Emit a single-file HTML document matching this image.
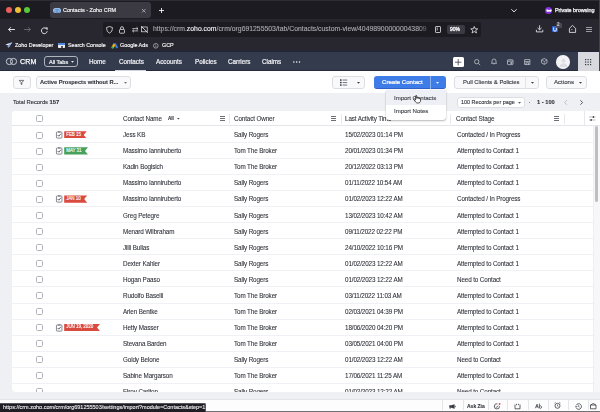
<!DOCTYPE html>
<html><head><meta charset="utf-8">
<style>
*{margin:0;padding:0;box-sizing:border-box}
html,body{width:600px;height:412px;overflow:hidden;background:#fff;font-family:"Liberation Sans",sans-serif;position:relative}
.t,.nv,.row span,.hd{will-change:transform;-webkit-text-stroke-width:0.12px}
.a{position:absolute}
.t{position:absolute;white-space:nowrap;line-height:1}
svg{position:absolute;overflow:visible}
#tabstrip{left:0;top:0;width:600px;height:19px;background:#1c1b22}
#tab{left:49.5px;top:2px;width:101.5px;height:16px;background:#3b3a43;border-radius:3px}
.tl{position:absolute;top:7.1px;width:6.3px;height:6.3px;border-radius:50%}
#nav{left:0;top:19px;width:600px;height:31.5px;background:#28272f}
#url{left:103px;top:22px;width:377.5px;height:14.5px;background:#1c1b22;border-radius:2px}
.wt{color:#f8f8fa;-webkit-text-stroke:0.15px #f8f8fa}
#crm{left:0;top:50.5px;width:600px;height:20.8px;background:#343b4d;border-top:1.5px solid #20263a;border-bottom:1.3px solid #252b3b}
.nv{position:absolute;top:59.2px;font-size:6.3px;color:#f2f3f6;-webkit-text-stroke:0.2px #f2f3f6;white-space:nowrap;line-height:1}
.btn{position:absolute;top:75.8px;height:13.6px;border:1px solid #dcdee3;border-radius:3px;background:#f9f9fb}
#gray{left:0;top:93px;width:600px;height:307px;background:#eff0f4}
#card{left:12px;top:110.7px;width:588px;height:281px;background:#fff;border-radius:4px 0 0 4px;overflow:hidden}
#thead{left:0;top:0;width:588px;height:15.5px;background:#fff;border-bottom:1px solid #e3e5e9}
.row{position:absolute;left:12px;width:581px;height:16.05px;border-bottom:1px solid #f0f1f4}
.row span{position:absolute;top:5.3px;font-size:6.3px;letter-spacing:-0.12px;color:#2e3139;-webkit-text-stroke-width:0.08px;white-space:nowrap;line-height:1}
.cb{position:absolute;left:23.8px;top:4.5px;width:7.2px;height:7.2px;border:1px solid #b0b3b9;border-radius:1.6px}
.row span.rib{left:52.2px;top:4.3px;height:7.2px;color:#fff;font-size:4.5px;letter-spacing:-0.05px;padding:1.6px 0 0 2px;line-height:1;will-change:auto;-webkit-text-stroke:0.12px #fff;clip-path:polygon(0 0,100% 0,calc(100% - 3px) 50%,100% 100%,0 100%)}
.c1{left:110.6px}.c2{left:221.8px}.c3{left:333px}.c4{left:444.5px}
.hd{position:absolute;top:5.4px;font-size:6.3px;letter-spacing:-0.12px;color:#2e3139;-webkit-text-stroke-width:0.08px;white-space:nowrap;line-height:1}
.vd{position:absolute;top:3px;width:1px;height:10px;background:#e6e8ec}
.ic{stroke:#c4c8d0;fill:none;stroke-width:0.75}
.bd{position:absolute;top:400px;width:1px;height:10px;background:#e3e5e9}
</style></head><body>
<!-- ===== browser tab strip ===== -->
<div id="tabstrip" class="a"></div>
<div class="a" style="left:0;top:0;width:600px;height:1px;background:#2e2d35"></div>
<div class="tl" style="left:5.5px;background:#ec5e57"></div>
<div class="tl" style="left:14.65px;background:#f0bf33"></div>
<div class="tl" style="left:23.8px;background:#56c93d"></div>
<div id="tab" class="a"></div>
<div class="a" style="left:53px;top:7.5px;width:8px;height:5.8px;border-radius:3px;background:#9ec4ee"></div>
<svg style="left:53px;top:7.5px" width="8" height="6" viewBox="0 0 8 6"><circle cx="3.2" cy="2.9" r="1.6" fill="none" stroke="#4a78c0" stroke-width="0.6"/><circle cx="4.8" cy="2.9" r="1.6" fill="none" stroke="#4a78c0" stroke-width="0.6"/></svg>
<div class="t wt" style="left:63px;top:8px;font-size:5.5px">Contacts - Zoho CRM</div>
<svg style="left:142px;top:8.5px" width="3.5" height="3.5" viewBox="0 0 4 4"><path d="M0 0L4 4M4 0L0 4" stroke="#c9c8ce" stroke-width="0.8"/></svg>
<svg style="left:158.5px;top:7.5px" width="5" height="5" viewBox="0 0 5 5"><path d="M2.5 0V5M0 2.5H5" stroke="#f4f4f6" stroke-width="0.9"/></svg>
<svg style="left:510.8px;top:9px" width="6" height="3.2" viewBox="0 0 6 3.2"><path d="M0.3 0.3L3 2.9L5.7 0.3" stroke="#f4f4f6" stroke-width="0.9" fill="none"/></svg>
<div class="a" style="left:544.7px;top:6.8px;width:7.3px;height:7.3px;border-radius:50%;background:#8430d9"></div>
<svg style="left:545.5px;top:8.7px" width="6" height="3.5" viewBox="0 0 6 3.5"><path d="M0.3 0.8C1.5 0 2.5 0.6 3 1.2C3.5 0.6 4.5 0 5.7 0.8C5.9 2.6 4.5 3.4 3 2.4C1.5 3.4 0.1 2.6 0.3 0.8Z" fill="#fff"/></svg>
<div class="t wt" style="left:555px;top:8.1px;font-size:5.45px;letter-spacing:-0.05px;-webkit-text-stroke-width:0.25px">Private browsing</div>

<!-- ===== nav bar ===== -->
<div id="nav" class="a"></div>
<div id="url" class="a"></div>
<svg style="left:7.5px;top:27.3px" width="7" height="5" viewBox="0 0 7 5"><path d="M6.9 2.5H0.6M2.9 0.2L0.6 2.5L2.9 4.8" stroke="#f4f4f6" stroke-width="0.9" fill="none"/></svg>
<svg style="left:24px;top:27.3px" width="7" height="5" viewBox="0 0 7 5"><path d="M0.1 2.5H6.4M4.1 0.2L6.4 2.5L4.1 4.8" stroke="#6e6d74" stroke-width="0.9" fill="none"/></svg>
<svg style="left:40.6px;top:26.5px" width="7" height="7" viewBox="0 0 7 7"><path d="M6 2.6A2.9 2.9 0 1 0 6.2 4.2" stroke="#f4f4f6" stroke-width="0.9" fill="none"/><path d="M4.4 0.6L6.6 0.6L6.6 2.8Z" fill="#f4f4f6"/></svg>
<svg style="left:106px;top:26px" width="7" height="7.6" viewBox="0 0 7 7.6"><path d="M3.5 0.5L6.4 1.5C6.4 4.5 5.5 6.2 3.5 7.1C1.5 6.2 0.6 4.5 0.6 1.5Z" stroke="#e8e8ea" stroke-width="0.8" fill="none"/></svg>
<svg style="left:119.4px;top:26px" width="6" height="7.6" viewBox="0 0 6 7.6"><path d="M1.5 3.4V2.2A1.5 1.5 0 0 1 4.5 2.2V3.4" stroke="#e8e8ea" stroke-width="0.8" fill="none"/><rect x="0.5" y="3.4" width="5" height="3.8" rx="0.8" stroke="#e8e8ea" stroke-width="0.8" fill="none"/></svg>
<svg style="left:132px;top:27px" width="6.5" height="5.5" viewBox="0 0 6.5 5.5"><path d="M0.3 1.6H6M4.5 0.2L6 1.6L4.5 3M6.2 3.9H0.5M2 2.5L0.5 3.9L2 5.3" stroke="#e8e8ea" stroke-width="0.7" fill="none"/></svg>
<svg style="left:141px;top:26px" width="7" height="7" viewBox="0 0 7 7"><rect x="0.6" y="1" width="5.6" height="4.8" stroke="#e8e8ea" stroke-width="0.7" fill="none"/><path d="M0.2 0.2L6.8 6.8" stroke="#e8e8ea" stroke-width="0.8"/></svg>
<div class="t" style="left:153px;top:26.3px;font-size:6.85px;color:#a9a8ae">https://crm.<span style="color:#f4f4f6">zoho.com</span>/crm/org691255503/tab/Contacts/custom-view/404989000000043809</div>
<div class="a" style="left:418px;top:22px;width:16px;height:14.5px;background:linear-gradient(to right,rgba(28,27,34,0),#1c1b22 85%)"></div>
<svg style="left:435px;top:26px" width="6" height="7" viewBox="0 0 6 7"><rect x="0.5" y="0.5" width="5" height="6" rx="0.6" stroke="#e8e8ea" stroke-width="0.8" fill="none"/><path d="M2.2 1.5V4.5" stroke="#e8e8ea" stroke-width="0.7"/></svg>
<div class="a" style="left:447px;top:25px;width:17.5px;height:9px;background:#3b3a43;border-radius:2px"></div>
<div class="t wt" style="left:450px;top:27.4px;font-size:5px;-webkit-text-stroke-width:0.3px">90%</div>
<svg style="left:469.5px;top:25.5px" width="8.5" height="7.6" viewBox="0 0 8.5 8"><path d="M4.25 0.5L5.3 3H7.9L5.8 4.7L6.6 7.4L4.25 5.8L1.9 7.4L2.7 4.7L0.6 3H3.2Z" stroke="#f4f4f6" stroke-width="0.8" fill="none" stroke-linejoin="round"/></svg>
<svg style="left:535.8px;top:25px" width="7.2" height="7.5" viewBox="0 0 7.2 7.5"><path d="M3.6 0.3V4.8M1.6 2.9L3.6 4.8L5.6 2.9M0.4 4.8V6.9H6.8V4.8" stroke="#f4f4f6" stroke-width="0.8" fill="none"/></svg>
<div class="a" style="left:552px;top:25.8px;width:5.5px;height:6.7px;background:#2f62d6;border-radius:1px"></div>
<svg style="left:552.8px;top:26.8px" width="4" height="5" viewBox="0 0 4 5"><path d="M0.6 0.5V2.8A1.4 1.4 0 0 0 3.4 2.8V0.5" stroke="#fff" stroke-width="0.9" fill="none"/></svg>
<div class="a" style="left:555.5px;top:22.8px;width:6px;height:5.5px;background:#4a4952;border-radius:1px"></div>
<div class="t" style="left:557.3px;top:23.3px;font-size:4.5px;color:#ddd">2</div>
<svg style="left:569px;top:25px" width="7" height="7.8" viewBox="0 0 7 7.8"><path d="M3.5 0.4L6.6 3.4V7.4H0.4V3.4Z" stroke="#f4f4f6" stroke-width="0.8" fill="none" stroke-linejoin="round"/><path d="M2.2 5.2L3.4 4" stroke="#f4f4f6" stroke-width="0.7"/></svg>
<svg style="left:585.8px;top:26.7px" width="6" height="5" viewBox="0 0 6 5"><path d="M0 0.5H6M0 2.5H6M0 4.5H6" stroke="#b9b8be" stroke-width="0.8"/></svg>
<!-- ===== bookmarks ===== -->
<svg style="left:5.2px;top:42.2px" width="7.5" height="6" viewBox="0 0 7.5 6"><path d="M7.3 0.2L0.3 2.6L2.8 3.2L3.6 5.8Z" fill="#e8eef8"/><path d="M7.3 0.2L2.8 3.2L3.6 5.8Z" fill="#6fa1e8"/><path d="M3.1 3.6L1.6 5.5L3.4 4.6Z" fill="#e25544"/></svg>
<div class="t wt" style="left:14.5px;top:42.6px;font-size:5.4px">Zoho Developer</div>
<div class="a" style="left:58.3px;top:42.8px;width:7px;height:5.4px;background:#e8ecf2;border-radius:0.8px"></div>
<div class="a" style="left:58.3px;top:42.8px;width:7px;height:2px;background:#4f86e6;border-radius:0.8px 0.8px 0 0"></div>
<div class="a" style="left:60.8px;top:45.6px;width:2px;height:2.6px;background:#555"></div>
<div class="t wt" style="left:67.5px;top:42.6px;font-size:5.3px">Search Console</div>
<svg style="left:110.7px;top:42.5px" width="7.5" height="5.8" viewBox="0 0 7.5 5.8"><path d="M2.6 0.3L4.9 0.3L7.2 4.6L5.2 5.6Z" fill="#3c7bea"/><path d="M2.6 0.3L0.3 4.6L2.3 5.6L4.3 2.2Z" fill="#f5b400"/><circle cx="1.4" cy="4.6" r="1.1" fill="#34a853"/></svg>
<div class="t wt" style="left:119.7px;top:42.6px;font-size:5.4px">Google Ads</div>
<svg style="left:153.4px;top:42.6px" width="5.6" height="5.6" viewBox="0 0 6 6"><circle cx="3" cy="3" r="2.5" stroke="#c8c8cc" stroke-width="0.7" fill="none"/><path d="M3 2.6V4.4" stroke="#c8c8cc" stroke-width="0.7"/><circle cx="3" cy="1.7" r="0.35" fill="#c8c8cc"/></svg>
<div class="t wt" style="left:161.7px;top:42.6px;font-size:5.4px">GCP</div>
<!-- ===== crm header ===== -->
<div id="crm" class="a"></div>
<svg style="left:5px;top:57px" width="13" height="9" viewBox="0 0 13 9"><circle cx="4.4" cy="4.5" r="3.1" stroke="#cdd1d8" stroke-width="0.95" fill="none"/><circle cx="8.5" cy="4.5" r="3.1" stroke="#cdd1d8" stroke-width="0.95" fill="none"/></svg>
<div class="t" style="left:19.7px;top:58.9px;font-size:7.1px;color:#fff;letter-spacing:0.1px;-webkit-text-stroke:0.25px #fff">CRM</div>
<div class="a" style="left:44px;top:56px;width:34px;height:11px;border:1px solid #aeb3bd;border-radius:3px"></div>
<div class="nv" style="left:49px;top:59.9px;font-size:5.5px">All Tabs</div>
<svg style="left:71.2px;top:61.3px" width="3" height="2" viewBox="0 0 3 2"><path d="M0 0H3L1.5 1.8Z" fill="#eceef2"/></svg>
<div class="nv" style="left:89px">Home</div>
<div class="nv" style="left:118.6px">Contacts</div>
<div class="a" style="left:115px;top:69.6px;width:31px;height:1.4px;background:#cfd3da"></div>
<div class="nv" style="left:156px">Accounts</div>
<div class="nv" style="left:195px">Policies</div>
<div class="nv" style="left:228px">Carriers</div>
<div class="nv" style="left:262px">Claims</div>
<svg style="left:292.5px;top:61px" width="8" height="2" viewBox="0 0 8 2"><circle cx="0.9" cy="1" r="0.75" fill="#fff"/><circle cx="3.7" cy="1" r="0.75" fill="#fff"/><circle cx="6.5" cy="1" r="0.75" fill="#fff"/></svg>
<div class="a" style="left:453.3px;top:57.3px;width:10.4px;height:9.4px;background:#fff;border-radius:1.5px"></div>
<svg style="left:455.3px;top:58.8px" width="6.4" height="6.4" viewBox="0 0 6.4 6.4"><path d="M3.2 0V6.4M0 3.2H6.4" stroke="#2d3345" stroke-width="0.75"/></svg>
<svg style="left:473.5px;top:58.5px" width="6.5" height="6.5" viewBox="0 0 6.5 6.5"><circle cx="2.7" cy="2.7" r="2.2" class="ic"/><path d="M4.3 4.3L6.2 6.2" class="ic"/></svg>
<svg style="left:490.5px;top:58.3px" width="6" height="6.5" viewBox="0 0 6 6.5"><path d="M1 4.8V3A2 2 0 0 1 5 3V4.8L5.6 5.3H0.4Z" class="ic"/><path d="M2.3 5.9H3.7" class="ic"/></svg>
<svg style="left:507px;top:58.5px" width="6.5" height="6" viewBox="0 0 6.5 6"><rect x="0.5" y="0.8" width="5.5" height="4.8" rx="0.6" class="ic"/><path d="M0.5 2.2H6" class="ic"/><rect x="3.4" y="3.2" width="1.8" height="1.6" fill="#bcc1cb"/></svg>
<svg style="left:523.5px;top:58.5px" width="6.5" height="6" viewBox="0 0 6.5 6"><path d="M0.6 0.6H5.9L5.9 5.5H0.6Z M0.6 2.6H5.9 M2 5.5V3.8H4.5V5.5" class="ic"/></svg>
<svg style="left:540.5px;top:58.2px" width="6.5" height="6.8" viewBox="0 0 6.5 6.8"><path d="M3.25 0.4L6 1.9V4.9L3.25 6.4L0.5 4.9V1.9Z" class="ic"/><path d="M0.5 1.9L3.25 3.4L6 1.9M3.25 3.4V6.4" class="ic" style="stroke-width:0.6"/></svg>
<div class="a" style="left:556.3px;top:55.3px;width:13.6px;height:13.4px;border-radius:50%;background:#f3f3f5"></div>
<svg style="left:558.5px;top:57px" width="9" height="11" viewBox="0 0 9 11"><circle cx="4.5" cy="3.8" r="2" fill="#dcdde2"/><path d="M0.5 10C1 7.5 2.5 6.3 4.5 6.3C6.5 6.3 8 7.5 8.5 10Z" fill="#dcdde2"/></svg>
<div class="a" style="left:578px;top:52px;width:20.5px;height:19px;background:#d8d9de"></div>
<svg style="left:585.2px;top:58.6px" width="6.2" height="6.2" viewBox="0 0 6.2 6.2"><g fill="#34373f"><rect x="0.0" y="0.0" width="1.2" height="1.2"/><rect x="2.5" y="0.0" width="1.2" height="1.2"/><rect x="5.0" y="0.0" width="1.2" height="1.2"/><rect x="0.0" y="2.5" width="1.2" height="1.2"/><rect x="2.5" y="2.5" width="1.2" height="1.2"/><rect x="5.0" y="2.5" width="1.2" height="1.2"/><rect x="0.0" y="5.0" width="1.2" height="1.2"/><rect x="2.5" y="5.0" width="1.2" height="1.2"/><rect x="5.0" y="5.0" width="1.2" height="1.2"/></g></svg>
<div class="a" style="left:599px;top:0;width:1px;height:71px;background:#44434a"></div>
<!-- ===== toolbar ===== -->
<div class="btn" style="left:12.6px;width:18.4px"></div>
<svg style="left:19.3px;top:80.2px" width="5" height="5" viewBox="0 0 5 5"><path d="M0.3 0.4H4.7L2.9 2.6V4.6L2.1 4.1V2.6Z" stroke="#3a3d45" stroke-width="0.7" fill="none" stroke-linejoin="round"/></svg>
<div class="btn" style="left:35.5px;width:95.5px"></div>
<div class="t" style="left:40px;top:80.1px;font-size:5.7px;font-weight:bold;color:#33363e">Active Prospects without R...</div>
<svg style="left:123.8px;top:82px" width="3" height="1.8" viewBox="0 0 3 1.8"><path d="M0 0H3L1.5 1.8Z" fill="#6b6f77"/></svg>
<div class="btn" style="left:332.2px;width:32.5px"></div>
<svg style="left:340px;top:79px" width="7.5" height="7" viewBox="0 0 7.5 7"><g fill="#3a3d45"><rect x="0" y="0.3" width="1.6" height="1.5"/><rect x="0" y="2.8" width="1.6" height="1.5"/><rect x="0" y="5.3" width="1.6" height="1.5"/></g><g fill="#7d8189"><rect x="2.6" y="0.5" width="4.6" height="1.1"/><rect x="2.6" y="3" width="4.6" height="1.1"/><rect x="2.6" y="5.5" width="4.6" height="1.1"/></g></svg>
<svg style="left:357.3px;top:81.8px" width="3" height="1.8" viewBox="0 0 3 1.8"><path d="M0 0H3L1.5 1.8Z" fill="#3a3d45"/></svg>
<div class="a" style="left:374.4px;top:75.7px;width:71.3px;height:13.6px;background:#3e7ce8;border-radius:3px;border-bottom:1px solid #2f62c4"></div>
<div class="a" style="left:429.6px;top:76px;width:0.8px;height:13px;background:#8db3f3"></div>
<div class="t" style="left:382.3px;top:79.4px;font-size:6.1px;color:#fff;letter-spacing:-0.02px;-webkit-text-stroke:0.22px #fff">Create Contact</div>
<svg style="left:436px;top:82px" width="3" height="1.8" viewBox="0 0 3 1.8"><path d="M0 0H3L1.5 1.8Z" fill="#fff"/></svg>
<div class="btn" style="left:453.5px;width:85.75px"></div>
<div class="a" style="left:524.5px;top:76px;width:1px;height:13px;background:#e1e3e7"></div>
<div class="t" style="left:462.5px;top:79.5px;font-size:5.85px;color:#33363e">Pull Clients &amp; Policies</div>
<svg style="left:530.5px;top:82px" width="3" height="1.8" viewBox="0 0 3 1.8"><path d="M0 0H3L1.5 1.8Z" fill="#3a3d45"/></svg>
<div class="btn" style="left:545.5px;width:41.25px"></div>
<div class="t" style="left:553.7px;top:79.4px;font-size:6.1px;color:#33363e">Actions</div>
<svg style="left:579px;top:82px" width="3" height="1.8" viewBox="0 0 3 1.8"><path d="M0 0H3L1.5 1.8Z" fill="#3a3d45"/></svg>
<!-- ===== gray area ===== -->
<div id="gray" class="a"></div>
<div class="t" style="left:12.7px;top:99.6px;font-size:5.9px;letter-spacing:-0.08px;color:#33363e">Total Records <b>157</b></div>
<div class="a" style="left:456.75px;top:96.5px;width:68px;height:11px;background:#fff;border:1px solid #dcdee3;border-radius:3px"></div>
<div class="t" style="left:461px;top:99.6px;font-size:5.45px;color:#33363e">100 Records per page</div>
<svg style="left:518.3px;top:101.6px" width="3" height="1.8" viewBox="0 0 3 1.8"><path d="M0 0H3L1.5 1.8Z" fill="#55585f"/></svg>
<div class="a" style="left:529px;top:101.8px;width:1.3px;height:1.2px;background:#8a8d93"></div>
<div class="t" style="left:537.3px;top:99.5px;font-size:5.7px;font-weight:bold;color:#33363e">1 - 100</div>
<svg style="left:563.5px;top:100px" width="3.2" height="5" viewBox="0 0 3.2 5"><path d="M2.8 0.3L0.6 2.5L2.8 4.7" stroke="#b0b3b9" stroke-width="0.85" fill="none"/></svg>
<svg style="left:579.7px;top:100px" width="3.2" height="5" viewBox="0 0 3.2 5"><path d="M0.4 0.3L2.6 2.5L0.4 4.7" stroke="#3a3d45" stroke-width="0.85" fill="none"/></svg>
<!-- ===== card ===== -->
<div id="card" class="a">
<div id="thead" class="a"></div>
<i class="cb" style="top:4.4px"></i>
<div class="hd" style="left:110.6px">Contact Name</div>
<div class="t" style="left:156.2px;top:6.3px;font-size:4.6px;font-weight:bold;color:#33363e">All</div>
<svg style="left:165px;top:7.1px" width="2.6" height="1.5" viewBox="0 0 3 1.8"><path d="M0 0H3L1.5 1.8Z" fill="#33363e"/></svg>

<i class="vd" style="left:217.3px"></i>
<div class="hd" style="left:221.6px">Contact Owner</div>

<i class="vd" style="left:329.2px"></i>
<div class="hd" style="left:333px">Last Activity Time</div>
<i class="vd" style="left:438px"></i>
<div class="hd" style="left:444px">Contact Stage</div>

<i class="vd" style="left:551.5px"></i>
<i class="vd" style="left:571.8px;top:0;height:15.5px"></i>
<svg style="left:577px;top:5.4px" width="6.5" height="5" viewBox="0 0 6.5 5"><path d="M0 1H3.4M5.4 1H6.5M0 4H1.1M3.1 4H6.5" stroke="#9a9ea6" stroke-width="0.7"/><circle cx="4.4" cy="1" r="0.9" fill="#3a3d45"/><circle cx="2.1" cy="4" r="0.9" fill="#3a3d45"/></svg>
</div>
<div class="a" style="left:0;top:0;width:600px;height:391.7px;overflow:hidden">
<div class="row" style="top:127.00px">
<i class="cb"></i>
<svg style="left:43.7px;top:4.3px" width="6.4" height="7.5" viewBox="0 0 6.4 7.5"><rect x="0.45" y="0.9" width="5.5" height="6.2" rx="0.6" stroke="#6a6d74" stroke-width="0.8" fill="none"/><path d="M2 0.5H4.4V1.5H2Z" fill="#6a6d74"/><path d="M1.6 4L2.8 5.2L4.8 2.8" stroke="#33363e" stroke-width="0.8" fill="none"/></svg><span class="rib" style="width:22.5px;background:#d94a3f">FEB 15</span>
<span class="c1">Jess KB</span><span class="c2">Sally Rogers</span><span class="c3">15/02/2023 01:14 PM</span><span class="c4">Contacted / In Progress</span>
</div>
<div class="row" style="top:143.05px">
<i class="cb"></i>
<svg style="left:43.7px;top:4.3px" width="6.4" height="7.5" viewBox="0 0 6.4 7.5"><rect x="0.45" y="0.9" width="5.5" height="6.2" rx="0.6" stroke="#6a6d74" stroke-width="0.8" fill="none"/><path d="M2 0.5H4.4V1.5H2Z" fill="#6a6d74"/><path d="M1.6 4L2.8 5.2L4.8 2.8" stroke="#33363e" stroke-width="0.8" fill="none"/></svg><span class="rib" style="width:23.8px;background:#47a05b">MAY 31</span>
<span class="c1">Massimo Ianniruberto</span><span class="c2">Tom The Broker</span><span class="c3">20/01/2023 01:34 PM</span><span class="c4">Attempted to Contact 1</span>
</div>
<div class="row" style="top:159.10px">
<i class="cb"></i>
<span class="c1">Kadin Bogisich</span><span class="c2">Tom The Broker</span><span class="c3">20/12/2022 03:13 PM</span><span class="c4">Attempted to Contact 1</span>
</div>
<div class="row" style="top:175.15px">
<i class="cb"></i>
<span class="c1">Massimo Ianniruberto</span><span class="c2">Sally Rogers</span><span class="c3">01/11/2022 10:54 AM</span><span class="c4">Attempted to Contact 1</span>
</div>
<div class="row" style="top:191.20px">
<i class="cb"></i>
<svg style="left:43.7px;top:4.3px" width="6.4" height="7.5" viewBox="0 0 6.4 7.5"><rect x="0.45" y="0.9" width="5.5" height="6.2" rx="0.6" stroke="#6a6d74" stroke-width="0.8" fill="none"/><path d="M2 0.5H4.4V1.5H2Z" fill="#6a6d74"/><path d="M1.6 4L2.8 5.2L4.8 2.8" stroke="#33363e" stroke-width="0.8" fill="none"/></svg><span class="rib" style="width:23px;background:#d94a3f">JAN 10</span>
<span class="c1">Massimo Ianniruberto</span><span class="c2">Sally Rogers</span><span class="c3">01/02/2023 12:22 AM</span><span class="c4">Contacted / In Progress</span>
</div>
<div class="row" style="top:207.25px">
<i class="cb"></i>
<span class="c1">Greg Petegre</span><span class="c2">Sally Rogers</span><span class="c3">13/02/2023 10:42 AM</span><span class="c4">Attempted to Contact 1</span>
</div>
<div class="row" style="top:223.30px">
<i class="cb"></i>
<span class="c1">Menard Wilbraham</span><span class="c2">Sally Rogers</span><span class="c3">09/11/2022 02:22 PM</span><span class="c4">Attempted to Contact 1</span>
</div>
<div class="row" style="top:239.35px">
<i class="cb"></i>
<span class="c1">Jilli Bullas</span><span class="c2">Sally Rogers</span><span class="c3">24/10/2022 10:16 PM</span><span class="c4">Attempted to Contact 1</span>
</div>
<div class="row" style="top:255.40px">
<i class="cb"></i>
<span class="c1">Dexter Kahler</span><span class="c2">Sally Rogers</span><span class="c3">01/02/2023 12:22 AM</span><span class="c4">Attempted to Contact 1</span>
</div>
<div class="row" style="top:271.45px">
<i class="cb"></i>
<span class="c1">Hogan Paaso</span><span class="c2">Sally Rogers</span><span class="c3">01/02/2023 12:22 AM</span><span class="c4">Need to Contact</span>
</div>
<div class="row" style="top:287.50px">
<i class="cb"></i>
<span class="c1">Rudolfo Baselli</span><span class="c2">Tom The Broker</span><span class="c3">03/11/2022 11:03 AM</span><span class="c4">Attempted to Contact 1</span>
</div>
<div class="row" style="top:303.55px">
<i class="cb"></i>
<span class="c1">Arlen Bentke</span><span class="c2">Tom The Broker</span><span class="c3">02/03/2021 04:39 PM</span><span class="c4">Attempted to Contact 1</span>
</div>
<div class="row" style="top:319.60px">
<i class="cb"></i>
<svg style="left:43.7px;top:4.3px" width="6.4" height="7.5" viewBox="0 0 6.4 7.5"><rect x="0.45" y="0.9" width="5.5" height="6.2" rx="0.6" stroke="#6a6d74" stroke-width="0.8" fill="none"/><path d="M2 0.5H4.4V1.5H2Z" fill="#6a6d74"/><path d="M1.6 4L2.8 5.2L4.8 2.8" stroke="#33363e" stroke-width="0.8" fill="none"/></svg><span class="rib" style="width:35.8px;background:#d94a3f">JUN 19, 2020</span>
<span class="c1">Hetty Masser</span><span class="c2">Tom The Broker</span><span class="c3">18/06/2020 04:20 PM</span><span class="c4">Attempted to Contact 1</span>
</div>
<div class="row" style="top:335.65px">
<i class="cb"></i>
<span class="c1">Stevana Barden</span><span class="c2">Tom The Broker</span><span class="c3">03/05/2021 04:00 PM</span><span class="c4">Attempted to Contact 1</span>
</div>
<div class="row" style="top:351.70px">
<i class="cb"></i>
<span class="c1">Goldy Belone</span><span class="c2">Sally Rogers</span><span class="c3">01/02/2023 12:22 AM</span><span class="c4">Need to Contact</span>
</div>
<div class="row" style="top:367.75px">
<i class="cb"></i>
<span class="c1">Sabine Margarson</span><span class="c2">Tom The Broker</span><span class="c3">17/06/2021 11:25 AM</span><span class="c4">Attempted to Contact 1</span>
</div>
<div class="row" style="top:383.80px">
<i class="cb"></i>
<span class="c1">Elroy Carlton</span><span class="c2">Sally Rogers</span><span class="c3">01/02/2023 12:22 AM</span><span class="c4">Need to Contact</span>
</div>
</div>
<svg style="left:219.5px;top:116px" width="5" height="5" viewBox="0 0 5 5"><rect x="0" y="0" width="5" height="1" fill="#6c7078"/><rect x="0" y="2" width="5" height="1" fill="#6c7078"/><rect x="0" y="4" width="5" height="1" fill="#6c7078"/></svg><svg style="left:331.0px;top:116px" width="5" height="5" viewBox="0 0 5 5"><rect x="0" y="0" width="5" height="1" fill="#6c7078"/><rect x="0" y="2" width="5" height="1" fill="#6c7078"/><rect x="0" y="4" width="5" height="1" fill="#6c7078"/></svg><svg style="left:553.5px;top:116px" width="5" height="5" viewBox="0 0 5 5"><rect x="0" y="0" width="5" height="1" fill="#6c7078"/><rect x="0" y="2" width="5" height="1" fill="#6c7078"/><rect x="0" y="4" width="5" height="1" fill="#6c7078"/></svg>
<!-- scrollbar -->
<div class="a" style="left:593px;top:126.2px;width:7px;height:265.5px;background:#f7f7f9;border-left:1px solid #eceef1"></div>
<div class="a" style="left:594.7px;top:126.3px;width:3.7px;height:76px;background:#bdbec2;border-radius:1.5px"></div>
<!-- ===== dropdown menu ===== -->
<div class="a" style="left:385.6px;top:89.5px;width:60.9px;height:30.3px;background:#fff;border-radius:0 0 3px 3px;box-shadow:0 1px 2px rgba(0,0,0,0.28),0 0 1px rgba(0,0,0,0.2)"></div>
<div class="a" style="left:385.6px;top:89.5px;width:60.9px;height:15.2px;background:#eef0f5"></div>
<div class="t" style="left:394px;top:95.3px;font-size:6.1px;letter-spacing:-0.05px;color:#3e424a;-webkit-text-stroke:0.12px #3e424a">Import Contacts</div>
<div class="t" style="left:394px;top:108.2px;font-size:6.1px;letter-spacing:-0.05px;color:#3e424a;-webkit-text-stroke:0.12px #3e424a">Import Notes</div>
<svg style="left:412.6px;top:94.8px" width="9.5" height="8.5" viewBox="0 0 11 10"><path d="M3 1.2C3 0.4 4.4 0.4 4.4 1.2L4.4 4L4.6 3C4.8 2.4 6 2.5 6 3.2L6 4C6.2 3.3 7.4 3.4 7.4 4.1L7.4 4.6C7.6 4 8.8 4.1 8.8 4.8L8.8 6.6C8.8 8.2 7.8 9.4 6.2 9.4L5.2 9.4C4.2 9.4 3.6 8.9 3 8.2L1 5.6C0.6 5 1.4 4.2 2 4.8L3 5.8Z" fill="#fff" stroke="#111" stroke-width="0.9"/></svg>
<!-- ===== bottom bar ===== -->
<div class="a" style="left:0;top:399.3px;width:600px;height:12.7px;background:#fdfdfe;border-top:1px solid #e3e4e8"></div>
<i class="bd" style="left:442.3px"></i><i class="bd" style="left:462.6px"></i><i class="bd" style="left:487.8px"></i><i class="bd" style="left:507.4px"></i><i class="bd" style="left:527.9px"></i><i class="bd" style="left:547.5px"></i><i class="bd" style="left:567.8px"></i><i class="bd" style="left:588.1px"></i>
<svg style="left:449px;top:403.8px" width="7" height="5" viewBox="0 0 7 5"><path d="M0.3 1.3H2.2L5.6 0.2V4.8L2.2 3.7H0.3Z" fill="#3a3d45"/><path d="M1.2 3.7V4.8M6.3 1.8V3.2" stroke="#3a3d45" stroke-width="0.8"/></svg>
<div class="t" style="left:467px;top:403.5px;font-size:5px;font-weight:bold;color:#33363e">Ask Zia</div>
<svg style="left:494px;top:402.5px" width="7" height="6.5" viewBox="0 0 7 6.5"><path d="M5.5 3.2A2.6 2.6 0 1 1 3.4 0.8" stroke="#3a3d45" stroke-width="0.8" fill="none"/><path d="M1.8 3.6L2.8 4.4L4.2 2.6" stroke="#3a3d45" stroke-width="0.7" fill="none"/><circle cx="5.6" cy="1" r="0.9" fill="#e0463e"/></svg>
<svg style="left:514px;top:402.5px" width="7" height="7" viewBox="0 0 7 7"><path d="M1 1.5V5.8H6V1.5M2.5 0.8V2.2M4.5 0.8V2.2" stroke="#3a3d45" stroke-width="0.8" fill="none"/></svg>
<svg style="left:534.5px;top:402.8px" width="7" height="6" viewBox="0 0 7 6"><path d="M0.4 5.2L2 1.2L3.4 5.2M1 3.8H2.9M4.4 0.6V5.2M4.4 3.2C5.6 2.2 6.6 3 6.6 4.2C6.6 5.4 5.4 5.6 4.4 4.8" stroke="#3a3d45" stroke-width="0.75" fill="none"/></svg>
<svg style="left:554px;top:402.3px" width="7" height="7" viewBox="0 0 7 7"><circle cx="3.5" cy="3.8" r="2.5" stroke="#3a3d45" stroke-width="0.8" fill="none"/><path d="M3.5 2.6V3.9L4.4 4.5M0.6 1.2L1.6 0.4M6.4 1.2L5.4 0.4" stroke="#3a3d45" stroke-width="0.7" fill="none"/></svg>
<svg style="left:575px;top:402.5px" width="7" height="7" viewBox="0 0 7 7"><path d="M1.2 2.2A2.8 2.8 0 1 1 1 4.4" stroke="#3a3d45" stroke-width="0.8" fill="none"/><path d="M0.2 3.4H2.4M3.6 2.2V3.6L4.6 4.2" stroke="#3a3d45" stroke-width="0.7" fill="none"/></svg>
<svg style="left:590px;top:402.5px" width="6.5" height="6.5" viewBox="0 0 6.5 6.5"><path d="M0.5 2V5.8H6V2L3.25 0.5Z M0.5 2H6" stroke="#3a3d45" stroke-width="0.8" fill="none"/></svg>
<div class="a" style="left:0;top:411px;width:600px;height:1px;background:#707074"></div>
<div class="a" style="left:0;top:402.7px;width:205.8px;height:9.3px;background:#1f1e25;border-radius:0 2px 0 0;border-top:0.5px solid #55545a;border-right:0.5px solid #55545a"></div>
<div class="t" style="left:2.5px;top:404.6px;font-size:5.5px;color:#ececee">https://crm.zoho.com/crm/org691255503/settings/import?module=Contacts&amp;step=1</div>
</body></html>
